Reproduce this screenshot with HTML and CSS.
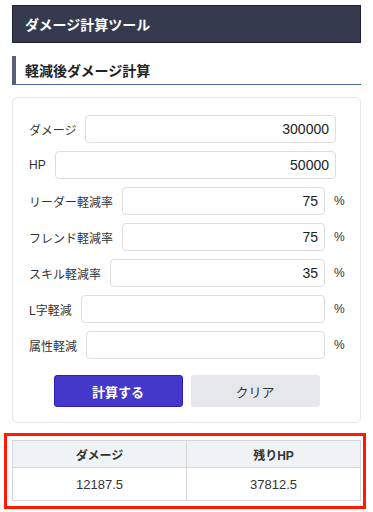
FILE: index.html
```html
<!DOCTYPE html>
<html lang="ja">
<head>
<meta charset="utf-8">
<title>ダメージ計算ツール</title>
<link rel="stylesheet" href="styles.css">
</head>
<body>
<div class="page">
  <h1 class="title">ダメージ計算ツール</h1>
  <h2 class="section">軽減後ダメージ計算</h2>
  <div class="card">
    <div class="row"><label>ダメージ</label><input class="field" value="300000"></div>
    <div class="row"><label>HP</label><input class="field" value="50000"></div>
    <div class="row unit"><label>リーダー軽減率</label><input class="field" value="75"><span class="pct">%</span></div>
    <div class="row unit"><label>フレンド軽減率</label><input class="field" value="75"><span class="pct">%</span></div>
    <div class="row unit"><label>スキル軽減率</label><input class="field" value="35"><span class="pct">%</span></div>
    <div class="row unit"><label>L字軽減</label><input class="field" value=""><span class="pct">%</span></div>
    <div class="row unit"><label>属性軽減</label><input class="field" value=""><span class="pct">%</span></div>
    <div class="buttons">
      <button class="btn calc">計算する</button>
      <button class="btn clear">クリア</button>
    </div>
  </div>
  <div class="result">
    <table class="res-table">
      <tr><th>ダメージ</th><th>残りHP</th></tr>
      <tr><td>12187.5</td><td>37812.5</td></tr>
    </table>
  </div>
</div>
</body>
</html>
```
FILE: styles.css
```css
* { box-sizing: border-box; }
body {
  margin: 0;
  background: #fff;
  font-family: "Liberation Sans", "Noto Sans CJK JP", sans-serif;
  color: #333;
}
.page {
  padding: 5px 12px 0 12px;
}
.title {
  margin: 0;
  height: 38px;
  background: #363a4f;
  border: 1px solid #1e2033;
  color: #fff;
  font-size: 14px;
  font-weight: bold;
  display: flex;
  align-items: center;
  padding-left: 12px;
}
.section {
  margin: 13px 0 0 0;
  height: 29px;
  border-left: 4px solid #5a5f78;
  border-bottom: 1px solid #4a62b0;
  font-size: 14px;
  font-weight: bold;
  color: #222;
  display: flex;
  align-items: center;
  padding-left: 9px;
}
.card {
  margin-top: 12px;
  border: 1px solid #e6e6e6;
  border-radius: 5px;
  padding: 17px 0 15px 16px;
}
.row {
  display: flex;
  align-items: center;
  height: 28px;
  margin: 0 24px 8px 0;
}
.row.unit {
  margin-right: 15px;
}
.row label {
  font-size: 12px;
  color: #333;
  margin-right: 9px;
  white-space: nowrap;
}
.field {
  flex: 1;
  min-width: 0;
  height: 28px;
  border: 1px solid #dedede;
  border-radius: 4px;
  padding: 0 6px;
  text-align: right;
  font-family: "Liberation Sans", sans-serif;
  font-size: 14px;
  color: #222;
  background: #fff;
}
.pct {
  width: 11px;
  margin-left: 9px;
  font-size: 12px;
  color: #333;
}
.buttons {
  display: flex;
  justify-content: center;
  gap: 8px;
  margin-top: 16px;
  padding-right: 16px;
}
.btn {
  width: 129px;
  height: 32px;
  border-radius: 3px;
  font-family: "Liberation Sans", "Noto Sans CJK JP", sans-serif;
  font-size: 13px;
}
.calc {
  background: #4338ca;
  border: 1px solid #2a1fb0;
  color: #fff;
  font-weight: bold;
}
.clear {
  background: #e5e7eb;
  border: 1px solid #e5e7eb;
  color: #333;
}
.result {
  margin: 10px -5px 0 -8px;
  border: 3px solid #ff1a00;
  padding: 4px 2px 5px 5px;
}
.res-table {
  width: 100%;
  border-collapse: collapse;
  table-layout: fixed;
}
.res-table th, .res-table td {
  border: 1px solid #d6d6d6;
  text-align: center;
}
.res-table th {
  height: 27px;
  background: #eff3f6;
  font-size: 12px;
  font-weight: bold;
  color: #333;
}
.res-table td {
  height: 33px;
  font-size: 13px;
  color: #333;
  background: #fff;
}
```
